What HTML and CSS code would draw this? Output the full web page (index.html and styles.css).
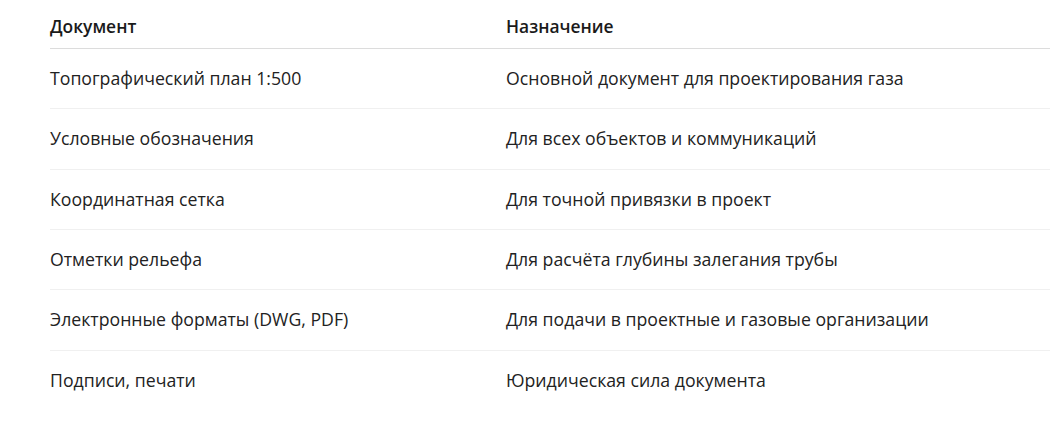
FILE: index.html
```html
<!DOCTYPE html>
<html lang="ru">
<head>
<meta charset="utf-8">
<link rel="stylesheet" href="styles.css">
</head>
<body>
<div class="wrap">
  <table class="docs">
    <thead>
      <tr><th class="c1">Документ</th><th>Назначение</th></tr>
    </thead>
    <tbody>
      <tr><td class="c1">Топографический план 1:500</td><td>Основной документ для проектирования газа</td></tr>
      <tr><td class="c1">Условные обозначения</td><td>Для всех объектов и коммуникаций</td></tr>
      <tr><td class="c1">Координатная сетка</td><td>Для точной привязки в проект</td></tr>
      <tr><td class="c1">Отметки рельефа</td><td>Для расчёта глубины залегания трубы</td></tr>
      <tr><td class="c1">Электронные форматы (DWG, PDF)</td><td>Для подачи в проектные и газовые организации</td></tr>
      <tr><td class="c1">Подписи, печати</td><td>Юридическая сила документа</td></tr>
    </tbody>
  </table>
</div>
</body>
</html>
```
FILE: styles.css
```css
html, body {
  margin: 0;
  padding: 0;
  background: #fff;
}
body {
  font-family: "Open Sans", "Noto Sans", "Liberation Sans", sans-serif;
  font-size: 17.7px;
  color: #222;
}
.wrap {
  padding: 7px 0 0 50px;
}
.docs {
  width: 100%;
  border-collapse: collapse;
}
.docs th, .docs td {
  text-align: left;
  line-height: 19.4px;
  padding: 20px 0;
  vertical-align: middle;
}
.docs th {
  font-weight: 600;
  font-size: 17.4px;
  color: #1a1a1a;
  padding: 10px 0 11.3px;
  border-bottom: 1px solid #dcdcdc;
}
.docs td {
  font-weight: 400;
}
.docs tbody tr + tr td {
  border-top: 1px solid #f0f0f0;
}
.docs .c1 {
  width: 456px;
}
```
